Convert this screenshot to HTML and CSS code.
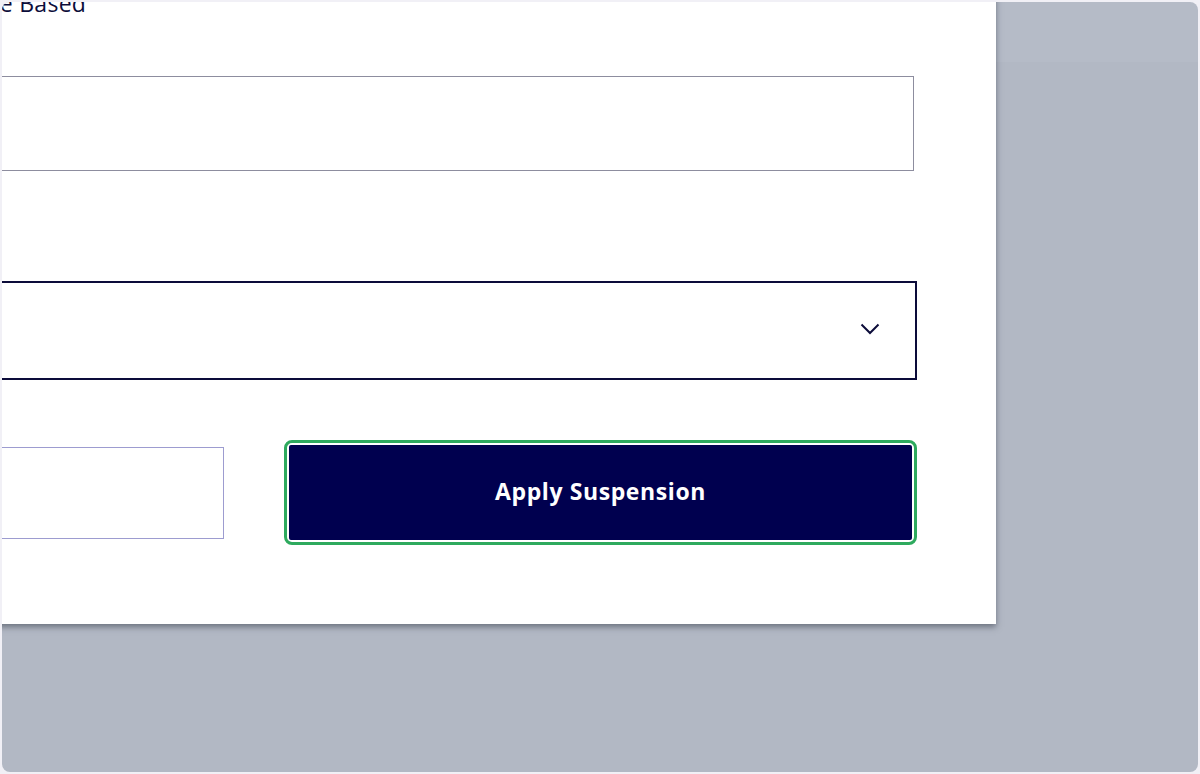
FILE: index.html
```html
<!DOCTYPE html>
<html lang="en">
<head>
<meta charset="utf-8">
<title>Apply Suspension</title>
<link rel="stylesheet" href="styles.css">
</head>
<body>
<div class="screen">
  <div class="modal">
    <div class="form">
      <div class="label">Time Based</div>
      <div class="text-input"></div>
      <div class="select">
        <svg class="chevron" width="20" height="12" viewBox="0 0 20 12"><path d="M1.5 1.5 L10 10 L18.5 1.5" fill="none" stroke="#0c0c3a" stroke-width="2"/></svg>
      </div>
      <div class="actions">
        <button class="btn-cancel" type="button"></button>
        <div class="focus-ring">
          <button class="btn-apply" type="button">Apply Suspension</button>
        </div>
      </div>
    </div>
  </div>
</div>
</body>
</html>
```

FILE: styles.css
```css
* { box-sizing: border-box; }
html, body { margin: 0; padding: 0; }
body {
  background: #f1f0f6;
  padding: 2px;
  width: 1200px;
  height: 774px;
  overflow: hidden;
  font-family: "Open Sans", Lato, sans-serif;
}
.screen {
  height: 770px;
  border-radius: 8px;
  overflow: hidden;
  background: linear-gradient(#b5bbc7 0, #b5bbc7 60px, #b2b8c4 60px, #b2b8c4 100%);
  display: flex;
  align-items: flex-start;
}
.modal {
  flex: none;
  width: 1484px;
  margin-left: -490px;
  margin-top: -52px;
  padding: 40px 79px 79px 79px;
  background: #ffffff;
  box-shadow: 0 3px 6px rgba(40, 45, 60, 0.5);
}
.form {
  width: 1326px;
  display: flex;
  flex-direction: column;
}
.label {
  font-size: 23px;
  font-weight: 500;
  line-height: 26px;
  color: #0c0c3a;
  padding-left: 368px;
  letter-spacing: 0.3px;
}
.text-input {
  margin-top: 60px;
  margin-right: 3px;
  height: 95px;
  border: 1px solid #8d8d9f;
  background: #fff;
}
.select {
  margin-top: 110px;
  height: 99px;
  border: 2px solid #0c0c3a;
  display: flex;
  align-items: center;
  justify-content: flex-end;
  padding-right: 35px;
  padding-bottom: 3px;
}
.chevron { display: block; }
.actions {
  margin-top: 60px;
  display: grid;
  grid-template-columns: 1fr 1fr;
  column-gap: 60px;
  align-items: center;
}
.btn-cancel {
  height: 92px;
  border: 1px solid #9d9cd0;
  background: #fff;
}
.focus-ring {
  border: 3px solid #2eaa5e;
  border-radius: 8px;
  padding: 2px;
  background: #fff;
}
.btn-apply {
  display: block;
  width: 100%;
  height: 95px;
  border: none;
  border-radius: 2px;
  background: #00004f;
  color: #ffffff;
  font-family: "Open Sans", Lato, sans-serif;
  font-weight: 700;
  font-size: 23px;
  letter-spacing: 0.6px;
  padding: 0 0 4px 0;
}
```
